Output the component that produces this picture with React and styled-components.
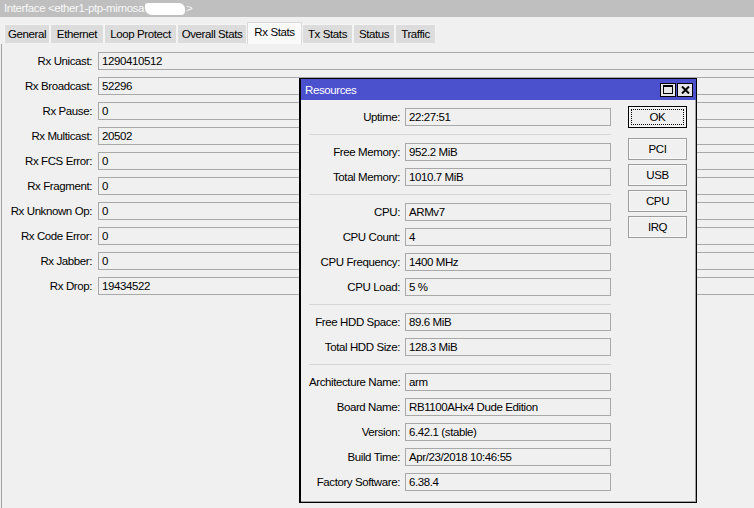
import React from "react";
import styled, { createGlobalStyle, css } from "styled-components";

const GlobalStyle = createGlobalStyle`
  html, body {
    margin: 0;
    padding: 0;
    background: #f0f0f0;
  }
  body {
    font-family: "Liberation Sans", Arial, sans-serif;
    font-size: 11.5px;
    letter-spacing: -0.4px;
    color: #000;
  }
`;

// 전체 창
const Window = styled.div`
  position: relative;
  width: 754px;
  height: 508px;
  overflow: hidden;
  background: #f0f0f0;
`;

// 창 제목 표시줄
const TitleBar = styled.div`
  height: 17px;
  line-height: 17px;
  padding-left: 4px;
  background: #bfbfbf;
  color: #f7f7f7;
  white-space: nowrap;
  display: flex;
  align-items: center;
`;

// 가려진 부분
const Redacted = styled.span`
  display: inline-block;
  width: 40px;
  height: 12px;
  margin: 1px 1px 0 1px;
  background: #fff;
  border-radius: 3px 6px 4px 7px;
`;

// 탭 줄
const TabStrip = styled.div`
  height: 27px;
  box-sizing: border-box;
  padding: 5px 0 0 4px;
  display: flex;
  align-items: flex-end;
`;

const Tab = styled.div`
  box-sizing: border-box;
  width: ${(p) => p.$w}px;
  height: 19px;
  margin-bottom: 1px;
  line-height: 18px;
  text-align: center;
  background: #dcdcdc;
  border: 1px solid #f4f4f4;
  border-bottom: none;
  white-space: nowrap;

  ${(p) =>
    p.$active &&
    css`
      height: 22px;
      margin-bottom: 0;
      line-height: 19px;
      background: #fafafa;
      border: 1px solid #d9d9d9;
      border-bottom: none;
    `}
`;

// 본문 패널
const Panel = styled.div`
  margin-left: 1px;
  height: 464px;
  border-left: 1px solid #a0a0a0;
  padding-top: 8px;
  box-sizing: border-box;
  display: flex;
  flex-direction: column;
  gap: 7px;
`;

const Row = styled.div`
  display: flex;
  align-items: center;
  height: 18px;
`;

const Label = styled.div`
  width: ${(p) => p.$w}px;
  flex: none;
  text-align: right;
  white-space: nowrap;
  margin-right: ${(p) => p.$gap}px;
`;

const Field = styled.div`
  box-sizing: border-box;
  height: 18px;
  line-height: 16px;
  padding-left: 3px;
  border: 1px solid #a8a8a8;
  background: #f0f0f0;
  white-space: nowrap;
  ${(p) =>
    p.$w
      ? css`
          width: ${p.$w}px;
        `
      : css`
          flex: 1;
          border-right: none;
        `}
`;

// 리소스 대화상자
const Dialog = styled.div`
  position: absolute;
  left: 299px;
  top: 78px;
  width: 398px;
  height: 425px;
  box-sizing: border-box;
  border: 1px solid #000;
  border-left-width: 2px;
  background: #f0f0f0;
  box-shadow: inset 0 -1px 0 #a0a0a0, inset -1px 0 0 #a0a0a0;
`;

const DialogTitle = styled.div`
  height: 21px;
  background: #4b50cd;
  color: #fff;
  padding-left: 4px;
  padding-right: 3px;
  display: flex;
  align-items: center;
  justify-content: space-between;
`;

const TitleButtons = styled.div`
  display: flex;
  gap: 1px;
`;

const TitleButton = styled.div`
  width: 16px;
  height: 14px;
  box-sizing: border-box;
  border: 1px solid #000;
  background: #e6e6e6;
  display: flex;
  align-items: center;
  justify-content: center;
`;

const DialogBody = styled.div`
  display: flex;
  padding: 8px 0 0 8px;
`;

const Form = styled.div`
  display: flex;
  flex-direction: column;
  width: 302px;
`;

const Group = styled.div`
  display: flex;
  flex-direction: column;
  gap: 7px;
`;

const Separator = styled.div`
  height: 0;
  margin: 8px 0;
  border-top: 1px solid #d6d6d6;
`;

const ButtonColumn = styled.div`
  margin-left: 17px;
  margin-top: -2px;
  display: flex;
  flex-direction: column;
  gap: 4px;
`;

const Button = styled.div`
  position: relative;
  width: 59px;
  height: 22px;
  box-sizing: border-box;
  border: 1px solid #9d9d9d;
  box-shadow: inset 0 0 0 1px #f8f8f8;
  background: #f0f0f0;
  line-height: 20px;
  text-align: center;

  ${(p) =>
    p.$default &&
    css`
      border-color: #000;
      margin-bottom: 6px;
      &::after {
        content: "";
        position: absolute;
        inset: 2px;
        border: 1px dotted #000;
      }
    `}
`;

const tabs = [
  { name: "General", w: 46 },
  { name: "Ethernet", w: 54 },
  { name: "Loop Protect", w: 73 },
  { name: "Overall Stats", w: 70 },
  { name: "Rx Stats", w: 55, active: true },
  { name: "Tx Stats", w: 51 },
  { name: "Status", w: 42 },
  { name: "Traffic", w: 41 },
];

const rxStats = [
  ["Rx Unicast:", "1290410512"],
  ["Rx Broadcast:", "52296"],
  ["Rx Pause:", "0"],
  ["Rx Multicast:", "20502"],
  ["Rx FCS Error:", "0"],
  ["Rx Fragment:", "0"],
  ["Rx Unknown Op:", "0"],
  ["Rx Code Error:", "0"],
  ["Rx Jabber:", "0"],
  ["Rx Drop:", "19434522"],
];

const resourceGroups = [
  [["Uptime:", "22:27:51"]],
  [
    ["Free Memory:", "952.2 MiB"],
    ["Total Memory:", "1010.7 MiB"],
  ],
  [
    ["CPU:", "ARMv7"],
    ["CPU Count:", "4"],
    ["CPU Frequency:", "1400 MHz"],
    ["CPU Load:", "5 %"],
  ],
  [
    ["Free HDD Space:", "89.6 MiB"],
    ["Total HDD Size:", "128.3 MiB"],
  ],
  [
    ["Architecture Name:", "arm"],
    ["Board Name:", "RB1100AHx4 Dude Edition"],
    ["Version:", "6.42.1 (stable)"],
    ["Build Time:", "Apr/23/2018 10:46:55"],
    ["Factory Software:", "6.38.4"],
  ],
];

const MaximizeIcon = () => (
  <svg width="10" height="9" viewBox="0 0 10 9">
    <rect x="0.5" y="0.5" width="9" height="8" fill="none" stroke="#000" />
    <rect x="0" y="0" width="10" height="2" fill="#000" />
  </svg>
);

const CloseIcon = () => (
  <svg width="9" height="8" viewBox="0 0 9 8">
    <path d="M1 0.5 L8 7.5 M8 0.5 L1 7.5" stroke="#000" strokeWidth="2" />
  </svg>
);

export default function App() {
  return (
    <>
      <GlobalStyle />
      <Window>
        <TitleBar>
          Interface &lt;ether1-ptp-mimosa
          <Redacted />
          &gt;
        </TitleBar>
        <TabStrip>
          {tabs.map((t) => (
            <Tab key={t.name} $w={t.w} $active={t.active}>
              {t.name}
            </Tab>
          ))}
        </TabStrip>
        <Panel>
          {rxStats.map(([label, value]) => (
            <Row key={label}>
              <Label $w={90} $gap={6}>
                {label}
              </Label>
              <Field>{value}</Field>
            </Row>
          ))}
        </Panel>

        <Dialog>
          <DialogTitle>
            <span>Resources</span>
            <TitleButtons>
              <TitleButton>
                <MaximizeIcon />
              </TitleButton>
              <TitleButton>
                <CloseIcon />
              </TitleButton>
            </TitleButtons>
          </DialogTitle>
          <DialogBody>
            <Form>
              {resourceGroups.map((group, i) => (
                <React.Fragment key={i}>
                  {i > 0 && <Separator />}
                  <Group>
                    {group.map(([label, value]) => (
                      <Row key={label}>
                        <Label $w={91} $gap={5}>
                          {label}
                        </Label>
                        <Field $w={206}>{value}</Field>
                      </Row>
                    ))}
                  </Group>
                </React.Fragment>
              ))}
            </Form>
            <ButtonColumn>
              <Button $default>OK</Button>
              <Button>PCI</Button>
              <Button>USB</Button>
              <Button>CPU</Button>
              <Button>IRQ</Button>
            </ButtonColumn>
          </DialogBody>
        </Dialog>
      </Window>
    </>
  );
}
